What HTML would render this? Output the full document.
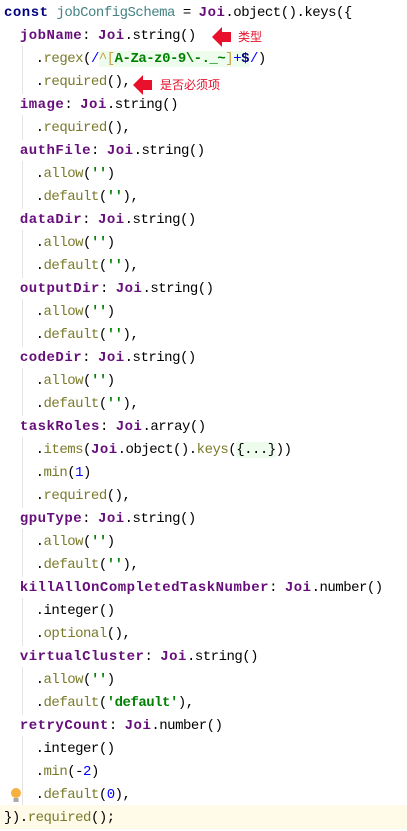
<!DOCTYPE html>
<html><head><meta charset="utf-8"><style>
body{margin:0;width:407px;height:829px;background:#fff;overflow:hidden;position:relative;font-family:"Liberation Mono",monospace;font-size:14px;letter-spacing:-0.5px;color:#000}
.l{position:absolute;left:4px;height:23px;line-height:23px;padding-top:2px;white-space:pre;width:403px}
.c::before{content:"";position:absolute;left:18px;top:0;height:25px;width:1px;background:#e4e4e4}
b{font-weight:bold;letter-spacing:0.5px}
.k{color:#000080}.v{color:#458383}.p{color:#660e7a}.m{color:#7a7a2b}.s{color:#008000;font-weight:bold}.n{color:#0000ff}
.rg{background:#edfced}
.last{background:#fffbe8;left:0;padding-left:4px}
.cn{position:absolute;color:#e8102a;font-family:"Noto Sans CJK SC",sans-serif;font-size:12px;line-height:14px;letter-spacing:0}
</style></head><body>
<div class="l" style="top:0px"><b class="k">const</b> <span class="v">jobConfigSchema</span> = <b class="p">Joi</b>.object().keys({</div>
<div class="l" style="top:23px">  <b class="p">jobName</b>: <b class="p">Joi</b>.string()</div>
<div class="l c" style="top:46px">    .<span class="m">regex</span>(<span class="n">/</span><span class="rg"><span style="color:#c8a040">^[</span><span class="s">A-Za-z0-9\-._~</span><span style="color:#c8a040">]</span><span class="n">+</span><b class="k">$</b></span><span class="n">/</span>)</div>
<div class="l c" style="top:69px">    .<span class="m">required</span>(),</div>
<div class="l" style="top:92px">  <b class="p">image</b>: <b class="p">Joi</b>.string()</div>
<div class="l c" style="top:115px">    .<span class="m">required</span>(),</div>
<div class="l" style="top:138px">  <b class="p">authFile</b>: <b class="p">Joi</b>.string()</div>
<div class="l c" style="top:161px">    .<span class="m">allow</span>(<span class="s">''</span>)</div>
<div class="l c" style="top:184px">    .<span class="m">default</span>(<span class="s">''</span>),</div>
<div class="l" style="top:207px">  <b class="p">dataDir</b>: <b class="p">Joi</b>.string()</div>
<div class="l c" style="top:230px">    .<span class="m">allow</span>(<span class="s">''</span>)</div>
<div class="l c" style="top:253px">    .<span class="m">default</span>(<span class="s">''</span>),</div>
<div class="l" style="top:276px">  <b class="p">outputDir</b>: <b class="p">Joi</b>.string()</div>
<div class="l c" style="top:299px">    .<span class="m">allow</span>(<span class="s">''</span>)</div>
<div class="l c" style="top:322px">    .<span class="m">default</span>(<span class="s">''</span>),</div>
<div class="l" style="top:345px">  <b class="p">codeDir</b>: <b class="p">Joi</b>.string()</div>
<div class="l c" style="top:368px">    .<span class="m">allow</span>(<span class="s">''</span>)</div>
<div class="l c" style="top:391px">    .<span class="m">default</span>(<span class="s">''</span>),</div>
<div class="l" style="top:414px">  <b class="p">taskRoles</b>: <b class="p">Joi</b>.array()</div>
<div class="l c" style="top:437px">    .<span class="m">items</span>(<b class="p">Joi</b>.object().<span class="m">keys</span>(<span class="rg">{...}</span>))</div>
<div class="l c" style="top:460px">    .<span class="m">min</span>(<span class="n">1</span>)</div>
<div class="l c" style="top:483px">    .<span class="m">required</span>(),</div>
<div class="l" style="top:506px">  <b class="p">gpuType</b>: <b class="p">Joi</b>.string()</div>
<div class="l c" style="top:529px">    .<span class="m">allow</span>(<span class="s">''</span>)</div>
<div class="l c" style="top:552px">    .<span class="m">default</span>(<span class="s">''</span>),</div>
<div class="l" style="top:575px">  <b class="p">killAllOnCompletedTaskNumber</b>: <b class="p">Joi</b>.number()</div>
<div class="l c" style="top:598px">    .integer()</div>
<div class="l c" style="top:621px">    .<span class="m">optional</span>(),</div>
<div class="l" style="top:644px">  <b class="p">virtualCluster</b>: <b class="p">Joi</b>.string()</div>
<div class="l c" style="top:667px">    .<span class="m">allow</span>(<span class="s">''</span>)</div>
<div class="l c" style="top:690px">    .<span class="m">default</span>(<span class="s">'default'</span>),</div>
<div class="l" style="top:713px">  <b class="p">retryCount</b>: <b class="p">Joi</b>.number()</div>
<div class="l c" style="top:736px">    .integer()</div>
<div class="l c" style="top:759px">    .<span class="m">min</span>(-<span class="n">2</span>)</div>
<div class="l c" style="top:782px">    .<span class="m">default</span>(<span class="n">0</span>),</div>
<div class="l last" style="top:805px;padding-top:0;height:24px;line-height:26px">}).<span class="m">required</span>();</div>
<svg style="position:absolute;left:10px;top:787px" width="12" height="16"><circle cx="6" cy="6" r="5" fill="#f4b040"/><rect x="3.5" y="11" width="5" height="4" fill="#aaa"/></svg>
<svg style="position:absolute;left:212px;top:27px" width="20" height="20"><polygon points="0,10 10,0 10,5 19,5 19,15 10,15 10,20" fill="#e8102a"/></svg>
<div class="cn" style="left:238px;top:30px">类型</div>
<svg style="position:absolute;left:133px;top:75px" width="20" height="20"><polygon points="0,10 10,0 10,5 19,5 19,15 10,15 10,20" fill="#e8102a"/></svg>
<div class="cn" style="left:160px;top:78px">是否必须项</div>
</body></html>
